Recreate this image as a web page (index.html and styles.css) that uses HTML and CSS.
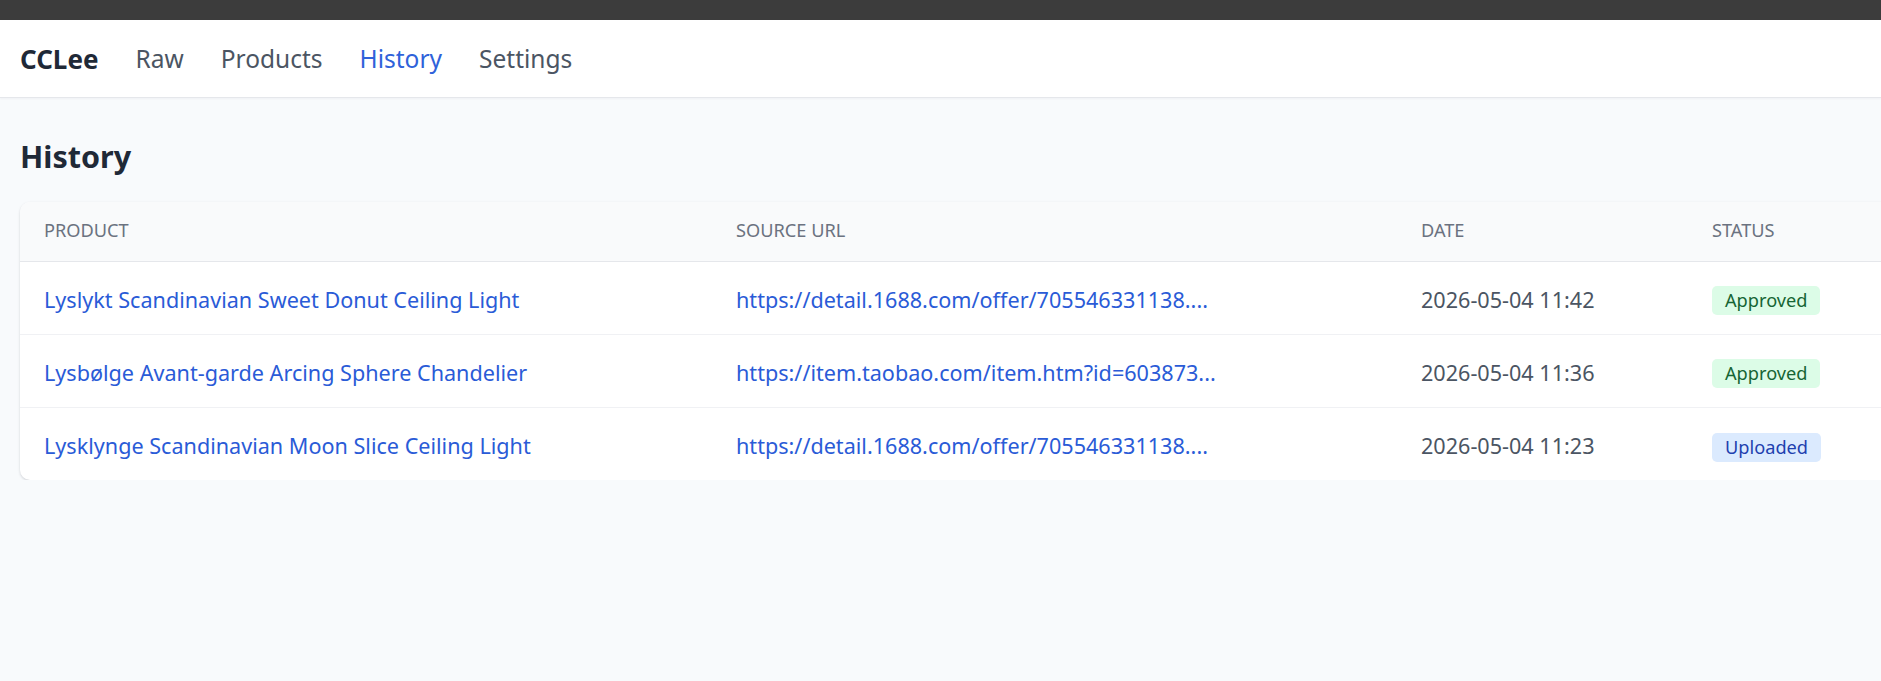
FILE: index.html
```html
<!DOCTYPE html>
<html lang="en">
<head>
<meta charset="utf-8">
<title>CCLee · History</title>
<link rel="stylesheet" href="styles.css">
</head>
<body>
<div class="topbar"></div>
<nav class="nav">
  <a class="brand" href="#">CCLee</a>
  <a class="nav-link" href="#">Raw</a>
  <a class="nav-link" href="#">Products</a>
  <a class="nav-link active" href="#">History</a>
  <a class="nav-link" href="#">Settings</a>
</nav>
<main class="page">
  <h1 class="page-title">History</h1>
  <div class="card">
    <table class="history">
      <colgroup>
        <col class="c-product">
        <col class="c-source">
        <col class="c-date">
        <col class="c-status">
      </colgroup>
      <thead>
        <tr>
          <th>Product</th>
          <th>Source URL</th>
          <th>Date</th>
          <th>Status</th>
        </tr>
      </thead>
      <tbody>
        <tr>
          <td><a href="#">Lyslykt Scandinavian Sweet Donut Ceiling Light</a></td>
          <td><a href="#">https://detail.1688.com/offer/705546331138....</a></td>
          <td class="date">2026-05-04 11:42</td>
          <td><span class="badge approved">Approved</span></td>
        </tr>
        <tr>
          <td><a href="#">Lysbølge Avant-garde Arcing Sphere Chandelier</a></td>
          <td><a href="#">https://item.taobao.com/item.htm?id=603873...</a></td>
          <td class="date">2026-05-04 11:36</td>
          <td><span class="badge approved">Approved</span></td>
        </tr>
        <tr>
          <td><a href="#">Lysklynge Scandinavian Moon Slice Ceiling Light</a></td>
          <td><a href="#">https://detail.1688.com/offer/705546331138....</a></td>
          <td class="date">2026-05-04 11:23</td>
          <td><span class="badge uploaded">Uploaded</span></td>
        </tr>
      </tbody>
    </table>
  </div>
</main>
</body>
</html>
```

FILE: styles.css
```css
* { box-sizing: border-box; }

html, body {
  margin: 0;
  padding: 0;
}

body {
  background: #f8fafc;
  font-family: "Noto Sans", "Open Sans", sans-serif;
  color: #1f2937;
  overflow-x: hidden;
}

a { text-decoration: none; }

.topbar {
  height: 20px;
  background: #3c3c3c;
}

.nav {
  height: 78px;
  background: #ffffff;
  border-bottom: 1px solid #e5e7eb;
  box-shadow: 0 1px 2px rgba(15, 23, 42, 0.04);
  display: flex;
  align-items: center;
  gap: 37px;
  padding: 0 20px;
}

.brand {
  font-size: 26px;
  font-weight: 700;
  color: #1f2937;
}

.nav-link {
  font-size: 24.5px;
  color: #4b5563;
}

.nav-link.active {
  color: #2f62da;
}

.page {
  padding: 35px 0 0 20px;
}

.page-title {
  margin: 0 0 23px 0;
  font-size: 30.5px;
  font-weight: 700;
  line-height: 46px;
  color: #1f2937;
}

.card {
  width: 1920px;
  background: #ffffff;
  border-radius: 10px;
  box-shadow: 0 1px 3px rgba(15, 23, 42, 0.12), 0 1px 2px rgba(15, 23, 42, 0.06);
  overflow: hidden;
}

.history {
  width: 100%;
  border-collapse: collapse;
  table-layout: fixed;
}

.c-product { width: 692px; }
.c-source { width: 685px; }
.c-date { width: 291px; }

.history th {
  height: 59px;
  padding: 0 24px 2px;
  text-align: left;
  font-size: 18.2px;
  font-weight: 400;
  text-transform: uppercase;
  color: #6b7280;
  background: #f9fafb;
  border-bottom: 1px solid #e5e7eb;
}

.history td {
  height: 73px;
  padding: 4px 24px 0;
  font-size: 21.6px;
  border-bottom: 1px solid #f0f1f4;
  white-space: nowrap;
}

.history tbody tr:last-child td {
  border-bottom: none;
}

.history td a {
  color: #2a5bd7;
}

.history td.date {
  color: #4b5563;
}

.badge {
  display: inline-block;
  padding: 2px 13px;
  border-radius: 5px;
  font-size: 18.2px;
  line-height: 25px;
  vertical-align: middle;
}

.badge.approved {
  background: #dcfce7;
  color: #166534;
}

.badge.uploaded {
  background: #dbeafe;
  color: #1e40af;
}
```
